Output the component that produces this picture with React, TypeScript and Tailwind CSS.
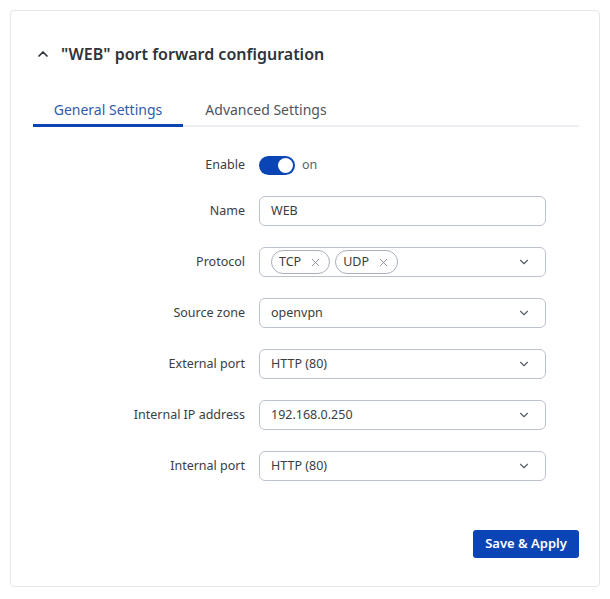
import { ChevronDown, ChevronUp, X } from "lucide-react";

const FIELDS = [
  { label: "Source zone", value: "openvpn" },
  { label: "External port", value: "HTTP (80)" },
  { label: "Internal IP address", value: "192.168.0.250" },
  { label: "Internal port", value: "HTTP (80)" },
];

function Row({ label, children }: { label: string; children: React.ReactNode }) {
  return (
    <div className="flex items-center gap-[14px]">
      <div className="w-[212px] shrink-0 text-right text-[12.5px] text-[#3a3d42]">{label}</div>
      {children}
    </div>
  );
}

function Select({ children }: { children: React.ReactNode }) {
  return (
    <div className="flex h-[30px] w-[287px] items-center rounded-[6px] border border-[#bcc2cc] pl-[11px] pr-[14px] text-[12.5px] text-[#3a3d42]">
      <div className="flex flex-1 items-center gap-[5px]">{children}</div>
      <ChevronDown className="h-[14px] w-[14px] text-[#5c6068]" strokeWidth={2} aria-hidden />
    </div>
  );
}

function Chip({ label }: { label: string }) {
  return (
    <span className="flex h-[24px] items-center gap-[8px] rounded-full border border-[#a9b0bb] pl-[7px] pr-[7px] text-[12.5px] text-[#3a3d42]">
      {label}
      <X className="h-[13px] w-[13px] text-[#7a7f88]" strokeWidth={1.5} aria-hidden />
    </span>
  );
}

export default function App() {
  return (
    <div className="min-h-[599px] bg-white p-[10px] font-['Noto_Sans',sans-serif]">
      <div className="flex h-[577px] w-[590px] flex-col rounded-[4px] border border-[#e4e6ea] pl-[22px] pr-[20px]">
        <div className="mt-[32px] flex h-[22px] items-center gap-[8px]">
          <span className="flex w-[20px] justify-center">
            <ChevronUp className="h-[16px] w-[16px] text-[#2f333a]" strokeWidth={2.6} aria-hidden />
          </span>
          <h2 className="text-[16px] font-semibold text-[#2f333a]">"WEB" port forward configuration</h2>
        </div>

        <div className="mt-[30px] flex items-end text-[14px]">
          <div className="flex h-[32px] w-[150px] items-start justify-center border-b-[3px] border-[#0b45b5] pt-[4px] text-[#2d5cae]">
            General Settings
          </div>
          <div className="flex h-[32px] w-[166px] items-start justify-center border-b-2 border-[#eceef2] pt-[4px] text-[#50545b]">
            Advanced Settings
          </div>
          <div className="h-[32px] flex-1 border-b-2 border-[#eceef2]" />
        </div>

        <div className="mt-[29px] flex flex-col gap-[21px]">
          <Row label="Enable">
            <div className="flex h-[19px] items-center gap-[7px]">
              <span className="flex h-[19px] w-[36px] items-center justify-end rounded-full bg-[#0b45b5] pr-[2px]">
                <span className="h-[15px] w-[15px] rounded-full bg-white" />
              </span>
              <span className="text-[12.5px] text-[#5c6068]">on</span>
            </div>
          </Row>
          <Row label="Name">
            <div className="flex h-[30px] w-[287px] items-center rounded-[6px] border border-[#bcc2cc] px-[11px] text-[12.5px] text-[#3a3d42]">
              WEB
            </div>
          </Row>
          <Row label="Protocol">
            <Select>
              <Chip label="TCP" />
              <Chip label="UDP" />
            </Select>
          </Row>
          {FIELDS.map((f) => (
            <Row key={f.label} label={f.label}>
              <Select>{f.value}</Select>
            </Row>
          ))}
        </div>

        <div className="mt-[49px] flex justify-end">
          <button className="h-[28px] w-[106px] rounded-[3px] bg-[#0b45b5] text-[13px] font-semibold text-white">
            Save &amp; Apply
          </button>
        </div>
      </div>
    </div>
  );
}
